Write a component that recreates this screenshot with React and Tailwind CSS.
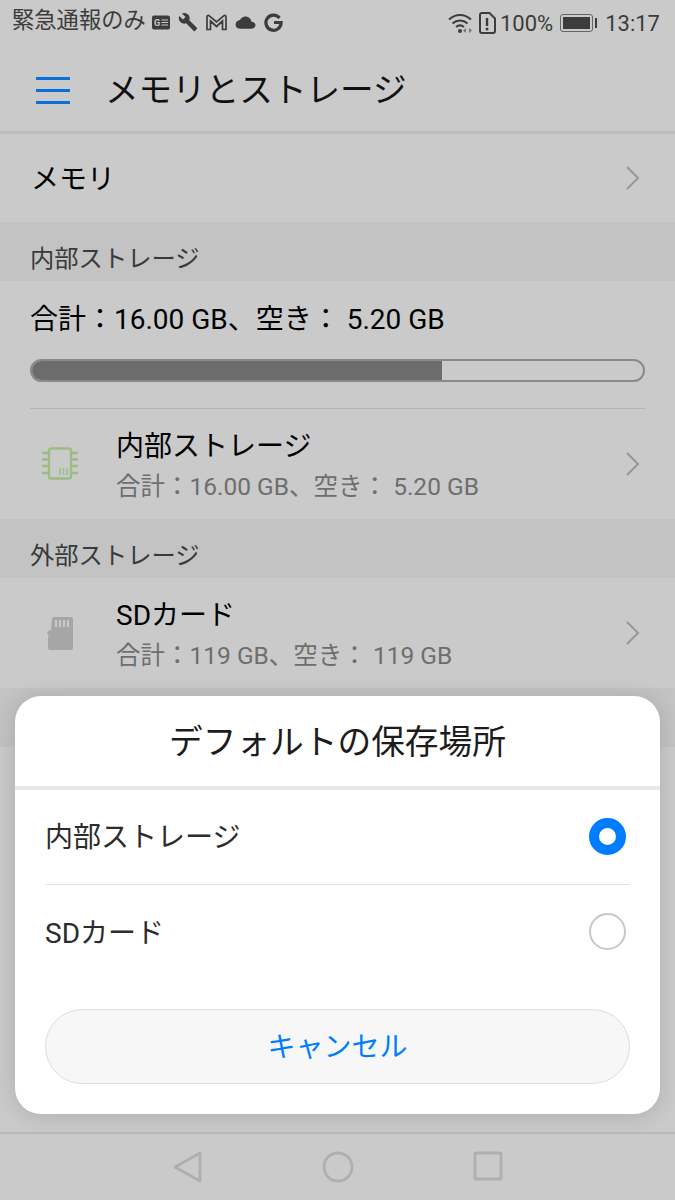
import React from 'react'

const JP = { fontFamily: '"Roboto", "Noto Sans CJK JP", sans-serif' }

function Chevron() {
  return (
    <svg width="16" height="26" viewBox="0 0 16 26" fill="none" stroke="#9a9a9a" strokeWidth="2.2">
      <path d="M2 2l11 11L2 24" />
    </svg>
  )
}

function StatusIcons() {
  return (
    <div className="flex items-center gap-[8px] ml-[6px] mt-[2px]">
      <svg width="18" height="15" viewBox="0 0 18 15">
        <rect x="0" y="0.5" width="18" height="14" rx="2" fill="#3c3c3c" />
        <text x="2" y="11" fontSize="9" fontWeight="700" fill="#cacaca" fontFamily="Roboto">G</text>
        <path d="M9.500 5h6.500M9.500 7.500h6.500M9.500 10h6.500" stroke="#cacaca" strokeWidth="1.200" />
      </svg>
      <svg width="20" height="20" viewBox="0 0 24 24" fill="#3c3c3c">
        <path d="M22.700 19l-9.100-9.100c.9-2.300.4-5-1.500-6.900-2-2-5-2.400-7.400-1.300L9 6 6 9 1.600 4.700C.4 7.100.9 10.100 2.900 12.100c1.900 1.900 4.600 2.400 6.900 1.500l9.100 9.100c.4.4 1 .4 1.400 0l2.300-2.300c.5-.4.5-1.100.1-1.400z" />
      </svg>
      <svg width="21" height="17" viewBox="0 0 21 17" fill="none" stroke="#3c3c3c" strokeWidth="1.700">
        <path d="M1 15.500V3c0-1.500 1.300-2 2.300-1.200L10.500 8l7.200-6.200C18.700 1 20 1.500 20 3v12.500h-3.500V7L10.500 12.500 4.500 7v8.500z" />
      </svg>
      <svg width="21" height="13" viewBox="0 0 22 14" fill="#3c3c3c">
        <path d="M17.500 6.100C16.900 2.900 14.200.6 11 .6 8.400.6 6.200 2 5.100 4.200 2.400 4.500.3 6.700.3 9.400c0 2.900 2.400 4.300 5.300 4.300h11.500c2.400 0 4.600-1.400 4.600-3.800 0-2.300-2-3.600-4.200-3.800z" />
      </svg>
      <svg width="19" height="19" viewBox="0 0 20 20" fill="none" stroke="#3c3c3c" strokeWidth="3.400">
        <path d="M16.300 5.200A8 8 0 1 0 18 10h-7.500" />
      </svg>
    </div>
  )
}

function StatusBar() {
  return (
    <div className="h-[49px] pb-[3px] flex items-center justify-between pl-3 pr-[15px] text-[#3c3c3c]">
      <div className="flex items-center text-[22.300px] pb-[4px]"><span>緊急通報のみ</span><StatusIcons /></div>
      <div className="flex items-center">
        <svg width="26" height="22" viewBox="0 0 26 22" fill="none" stroke="#3c3c3c" strokeWidth="2">
          <path d="M1 7.500c6.500-6 15.500-6 22 0M4.500 11.500c4.500-4 10.500-4 15 0M8 15c2.500-2 5.500-2 8 0" />
          <circle cx="12" cy="19" r="2" fill="#3c3c3c" stroke="none" />
          <path d="M18 16v5l-3-2.500zM21 16l3 2.500-3 2.500z" fill="#777" stroke="none" />
        </svg>
        <svg className="ml-[5px]" width="17" height="22" viewBox="0 0 17 22" fill="none" stroke="#3c3c3c" strokeWidth="2">
          <path d="M3 1h7.500L16 6.500V19a2 2 0 0 1-2 2H3a2 2 0 0 1-2-2V3a2 2 0 0 1 2-2z" />
          <path d="M8 6v8" strokeWidth="2.400" />
          <circle cx="8" cy="17" r="1.500" fill="#3c3c3c" stroke="none" />
        </svg>
        <span className="ml-[4px] text-[22px]">100%</span>
        <div className="ml-[7px] w-[33px] h-[18px] border border-[#666] rounded-[3px] p-[2px]">
          <div className="w-full h-full bg-[#3c3c3c]" />
        </div>
        <div className="ml-[2px] w-[2px] h-[10px] bg-[#3c3c3c]" />
        <span className="ml-[8px] text-[22px]">13:17</span>
      </div>
    </div>
  )
}

function SectionLabel({ children }) {
  return (
    <div className="h-[59px] bg-[#c3c3c3] px-[30px] pt-[22px] text-[24.300px] leading-[30px] text-[#3a3a3a]">{children}</div>
  )
}

function StorageRow({ icon, title, sub, height }) {
  return (
    <div className={`flex items-center ${height}`}>
      <div className="w-[116px] flex justify-center pl-[3px]">{icon}</div>
      <div className="flex-1 pt-[4px]">
        <div className="text-[28px] leading-[36px] text-black">{title}</div>
        <div className="text-[24.500px] leading-[32px] mt-[6px] text-[#6e6e6e]">{sub}</div>
      </div>
      <div className="pr-[34px]"><Chevron /></div>
    </div>
  )
}

function ChipIcon() {
  return (
    <svg width="36" height="34" viewBox="0 0 36 34" fill="none" stroke="#9bbd85" strokeWidth="2.400">
      <rect x="7" y="1.500" width="22" height="30" rx="2" />
      <path d="M0 6h6M0 12.500h6M0 19h6M0 26h6M30 6h6M30 12.500h6M30 19h6M30 26h6" />
      <path d="M18 21v7M21.500 21v7M25 21v7" strokeWidth="1.400" />
    </svg>
  )
}

function SdIcon() {
  return (
    <svg width="26" height="33" viewBox="0 0 26 33" fill="#a6a6a6">
      <path d="M5 2a2 2 0 0 1 2-2h17a2 2 0 0 1 2 2v29a2 2 0 0 1-2 2H3a2 2 0 0 1-2-2V20l1-1-1-1-1-2 1-2 3-1z" />
      <path d="M8 3h2v7H8zM12 3h2v7h-2zM16 3h2v7h-2zM20 3h2v7h-2z" fill="#cacaca" />
    </svg>
  )
}

function Dialog() {
  return (
    <div className="absolute left-[15px] top-[696px] w-[645px] h-[418px] bg-white rounded-[26px] shadow-[0_2px_22px_rgba(0,0,0,0.14)]">
      <div className="h-[94px] flex items-center justify-center text-[33.700px] pt-[4px] text-[#1c1c1c] border-b-[4px] border-[#e8e8e8]">デフォルトの保存場所</div>
      <div className="mx-[30px]">
        <div className="h-[95px] flex items-center justify-between border-b border-[#e4e4e4]">
          <span className="text-[28px] text-[#2c2c2c] pt-[2px]">内部ストレージ</span>
          <div className="w-[37px] h-[37px] rounded-full border-[10px] border-[#007dff] mr-[4px] mb-[2px]" />
        </div>
        <div className="h-[95px] flex items-center justify-between">
          <span className="text-[28px] text-[#2c2c2c] pt-[2px]">SDカード</span>
          <div className="w-[37px] h-[37px] rounded-full border-2 border-[#c8c8c8] mr-[4px] mb-[2px]" />
        </div>
        <div className="mt-[29px] h-[75px] rounded-full border border-[#dcdcdc] bg-[#f7f7f7] flex items-center justify-center text-[28px] pt-[2px] text-[#007dff]">キャンセル</div>
      </div>
    </div>
  )
}

export default function App() {
  return (
    <div className="relative w-[675px] h-[1200px] overflow-hidden bg-[#cacaca]" style={JP}>
      <StatusBar />
      <div className="h-[85px] flex items-center border-b-[3px] border-[#bcbcbc]">
        <div className="ml-[36px] w-[34px] flex flex-col gap-[9px]">
          <div className="h-[3px] bg-[#0a6fd6]" />
          <div className="h-[3px] bg-[#0a6fd6]" />
          <div className="h-[3px] bg-[#0a6fd6]" />
        </div>
        <span className="ml-[35px] text-[33.600px] pt-[2px] text-[#111]">メモリとストレージ</span>
      </div>
      <div className="h-[88px] flex items-center justify-between pl-[31px] pr-[34px] text-[28px] text-black">
        <span className="pt-[4px]">メモリ</span>
        <Chevron />
      </div>
      <SectionLabel>内部ストレージ</SectionLabel>
      <div className="mx-[30px] h-[128px] border-b border-[#b4b4b4] pt-[20px]">
        <div className="text-[28px] leading-[38px] text-black">合計：16.00 GB、空き： 5.20 GB</div>
        <div className="mt-[20px] h-[23px] rounded-full border-2 border-[#8a8a8a] overflow-hidden">
          <div className="h-full w-[410px] bg-[#6c6c6c]" />
        </div>
      </div>
      <StorageRow icon={<ChipIcon />} title="内部ストレージ" sub="合計：16.00 GB、空き： 5.20 GB" height="h-[110px]" />
      <SectionLabel>外部ストレージ</SectionLabel>
      <StorageRow icon={<SdIcon />} title="SDカード" sub="合計：119 GB、空き： 119 GB" height="h-[110px]" />
      <div className="h-[59px] bg-[#c3c3c3]" />
      <div className="absolute left-0 right-0 bottom-0 h-[68px] border-t-2 border-[#b8b8b8] flex items-center">
        <div className="w-full flex justify-center gap-[119px]">
          <svg width="30" height="32" viewBox="0 0 30 32" fill="none" stroke="#afafaf" strokeWidth="2.800" strokeLinejoin="round">
            <path d="M27 2L2 16l25 14z" />
          </svg>
          <svg width="32" height="32" viewBox="0 0 32 32" fill="none" stroke="#afafaf" strokeWidth="2.800">
            <circle cx="16" cy="16" r="14" />
          </svg>
          <svg width="30" height="30" viewBox="0 0 30 30" fill="none" stroke="#afafaf" strokeWidth="2.800" strokeLinejoin="round">
            <rect x="2" y="2" width="26" height="26" rx="1" />
          </svg>
        </div>
      </div>
      <Dialog />
    </div>
  )
}
